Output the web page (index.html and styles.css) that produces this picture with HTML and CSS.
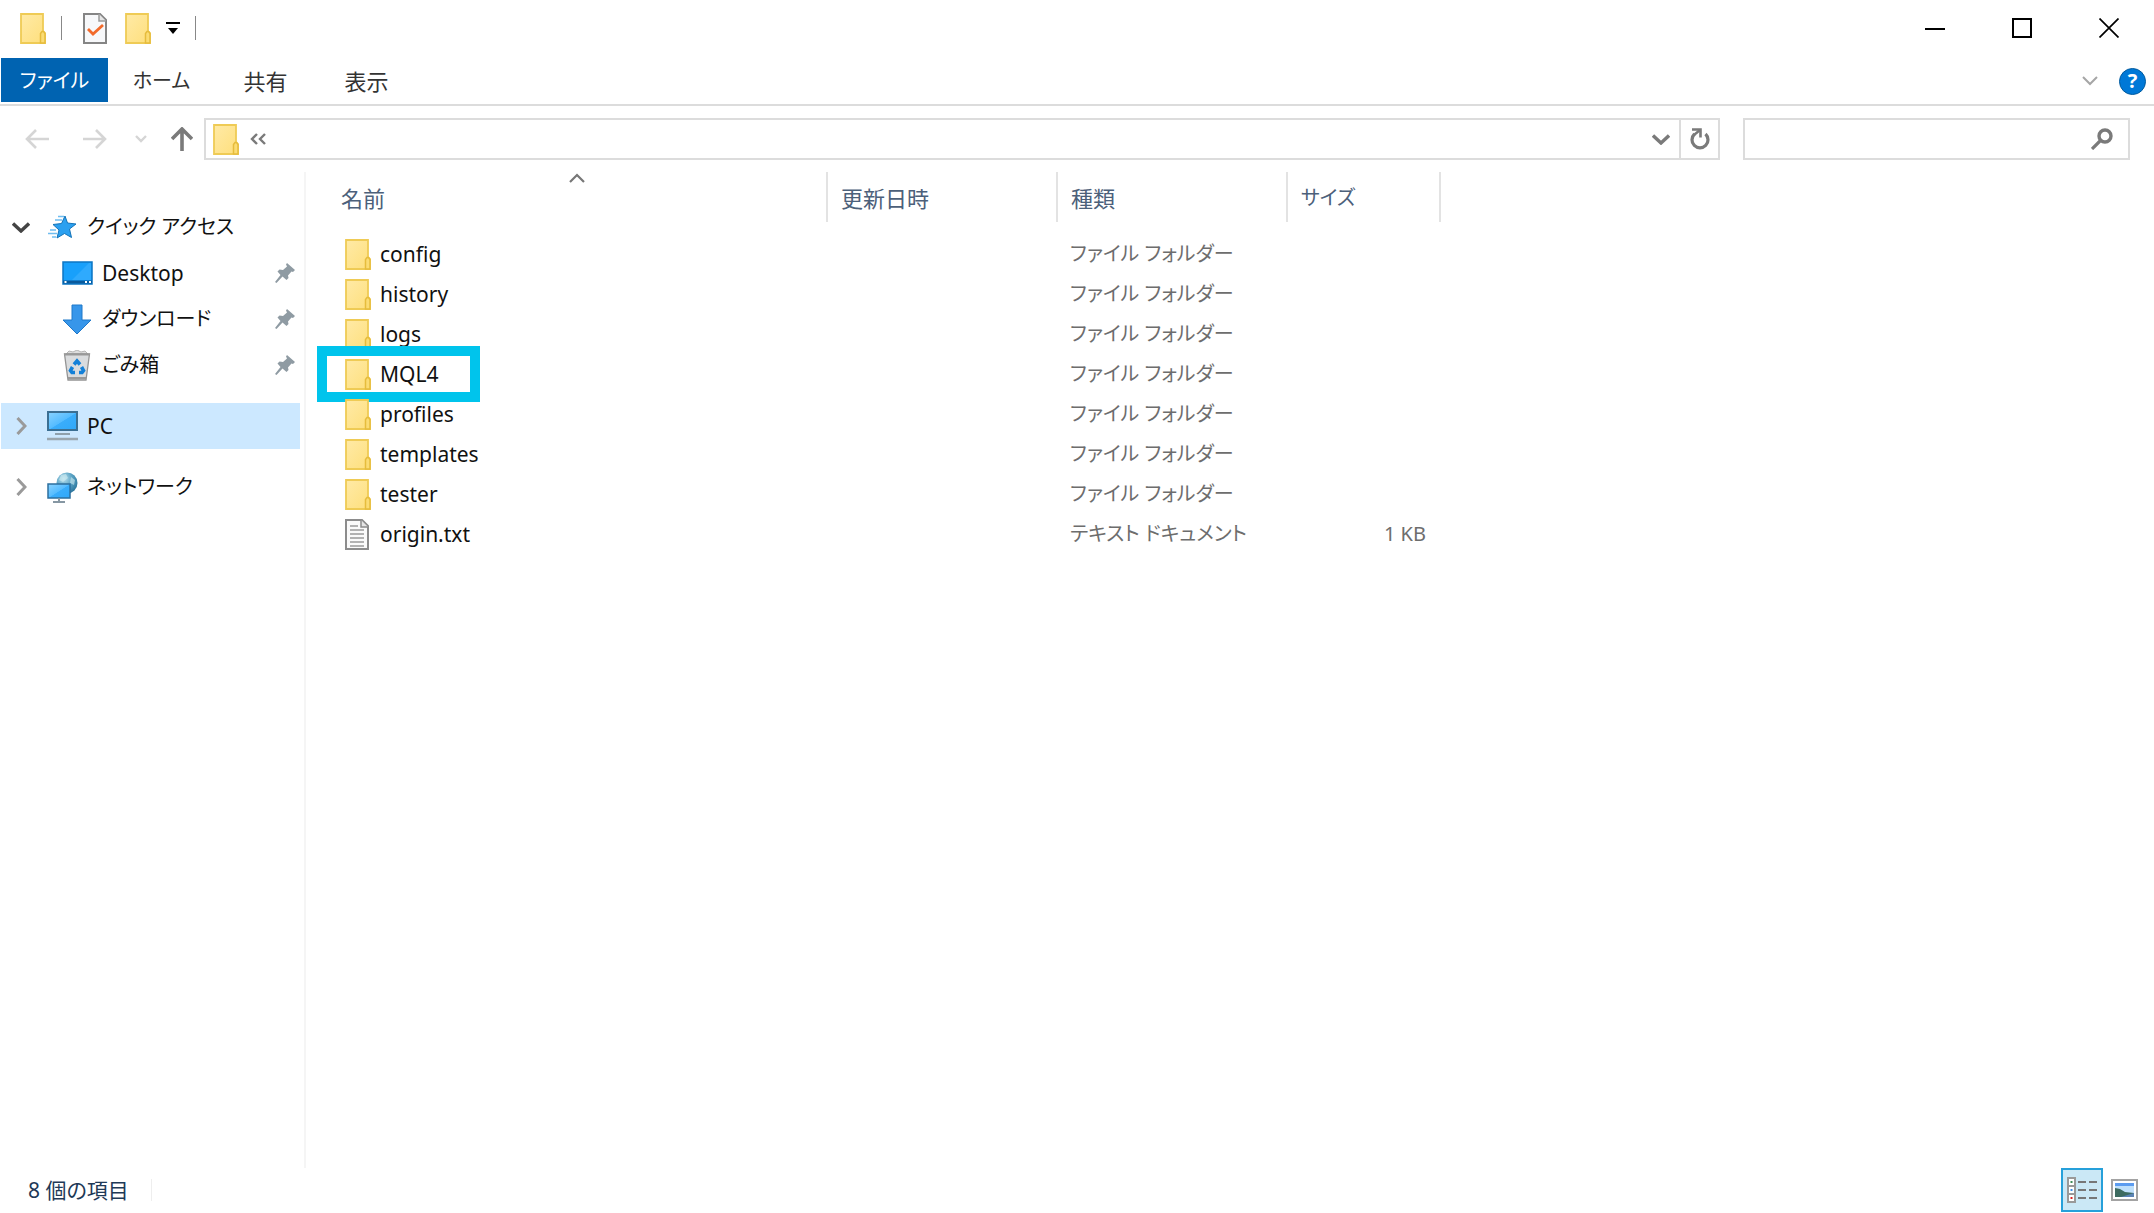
FILE: index.html
```html
<!DOCTYPE html>
<html lang="ja">
<head>
    <meta charset="UTF-8">
    <meta name="viewport" content="width=device-width, initial-scale=1.0">
    <title>エクスプローラー</title>
    <link rel="stylesheet" href="styles.css">
</head>
<body>
    <!-- Shared icons -->
    <svg class="sprite" aria-hidden="true">
        <defs>
            <linearGradient id="folder-fill" x1="0" y1="0" x2="1" y2="1">
                <stop offset="0" stop-color="#ffeaa6"/>
                <stop offset="1" stop-color="#fedf7c"/>
            </linearGradient>
            <linearGradient id="screen-fill" x1="0" y1="0" x2="1" y2="1">
                <stop offset="0" stop-color="#8bd3ff"/>
                <stop offset="0.5" stop-color="#55bcff"/>
                <stop offset="0.52" stop-color="#3aadfb"/>
                <stop offset="1" stop-color="#2fa8fa"/>
            </linearGradient>
            <radialGradient id="globe-fill" cx="0.35" cy="0.3" r="0.8">
                <stop offset="0" stop-color="#b9e0ee"/>
                <stop offset="0.5" stop-color="#5aa3c4"/>
                <stop offset="1" stop-color="#256f96"/>
            </radialGradient>
        </defs>
        <symbol id="folder" viewBox="0 0 26 31">
            <path d="M1 1H23V18L25 20V30H1Z" fill="url(#folder-fill)" stroke="#efcb55" stroke-width="1.8"/>
            <path d="M20.5 30V20.5L22 18.5H23.5L25 20.5V30Z" fill="#fbdc74" stroke="#e6bc3c" stroke-width="1.5"/>
        </symbol>
        <symbol id="pin" viewBox="0 0 20 20">
            <path d="M12 0L20 7L18 9L16.5 8.5L13 12.5L13.5 15L11.5 17L7.5 13.5L1.5 20L0 19L5.5 12L2.5 8.5L4.5 6.5L8 7L12 3.5L11 1.5Z" fill="#8f9ba3"/>
        </symbol>
        <symbol id="chevron-right" viewBox="0 0 11 18">
            <path d="M1.5 1L9 9L1.5 17" fill="none" stroke="currentColor" stroke-width="3"/>
        </symbol>
        <symbol id="chevron-down" viewBox="0 0 18 11">
            <path d="M1 1.5L9 9L17 1.5" fill="none" stroke="currentColor" stroke-width="3.4"/>
        </symbol>
    </svg>

    <div class="window">
        <header class="title-bar">
            <div class="quick-tools">
                <svg class="folder-icon"><use href="#folder"/></svg>
                <span class="tool-line"></span>
                <button class="tool tool-check" aria-label="プロパティ">
                    <svg width="24" height="31" viewBox="0 0 24 31">
                        <path d="M1 1H17L23 7V30H1Z" fill="#f7f8fa" stroke="#858585" stroke-width="2"/>
                        <path d="M16 1V8H23" fill="#e5e5e5" stroke="#9a9a9a" stroke-width="1.5"/>
                        <path d="M5 16L10 21L20 12" fill="none" stroke="#f26a2b" stroke-width="2.8"/>
                    </svg>
                </button>
                <button class="tool" aria-label="新しいフォルダー">
                    <svg class="folder-icon"><use href="#folder"/></svg>
                </button>
                <button class="tool" aria-label="クイック アクセス ツール バーのカスタマイズ">
                    <svg width="14" height="14" viewBox="0 0 14 14">
                        <path d="M0 2H14" stroke="#000" stroke-width="2"/>
                        <path d="M2 7H12L7 13Z" fill="#000"/>
                    </svg>
                </button>
                <span class="tool-line"></span>
            </div>
            <div class="window-buttons">
                <button aria-label="最小化">
                    <svg width="20" height="20"><path d="M0 11H20" stroke="#000" stroke-width="2"/></svg>
                </button>
                <button aria-label="最大化">
                    <svg width="20" height="20"><path d="M1 1H19V19H1Z" fill="none" stroke="#000" stroke-width="2"/></svg>
                </button>
                <button aria-label="閉じる">
                    <svg width="20" height="20"><path d="M0.5 0.5L19.5 19.5M19.5 0.5L0.5 19.5" stroke="#000" stroke-width="1.7"/></svg>
                </button>
            </div>
        </header>

        <nav class="ribbon">
            <button class="tab tab-kana tab-file">ファイル</button>
            <button class="tab tab-kana">ホーム</button>
            <button class="tab">共有</button>
            <button class="tab">表示</button>
            <div class="ribbon-end">
                <button class="ribbon-toggle" aria-label="リボンの展開">
                    <svg width="16" height="10"><path d="M1 1L8 8L15 1" fill="none" stroke="#a6a6a6" stroke-width="2"/></svg>
                </button>
                <button class="help" aria-label="ヘルプ">?</button>
            </div>
        </nav>

        <div class="nav-row">
            <div class="nav-buttons">
                <button class="nav-off" aria-label="戻る">
                    <svg width="24" height="20"><path d="M24 10H2M11 1L2 10L11 19" fill="none" stroke="currentColor" stroke-width="2.6"/></svg>
                </button>
                <button class="nav-off nav-forward" aria-label="進む">
                    <svg width="24" height="20"><path d="M0 10H22M13 1L22 10L13 19" fill="none" stroke="currentColor" stroke-width="2.6"/></svg>
                </button>
                <button class="nav-off" aria-label="最近表示した場所">
                    <svg width="12" height="8"><path d="M1 1L6 6L11 1" fill="none" stroke="currentColor" stroke-width="2.4"/></svg>
                </button>
                <button class="nav-up" aria-label="上へ">
                    <svg width="22" height="24"><path d="M11 24V2M1 12L11 2L21 12" fill="none" stroke="currentColor" stroke-width="3.6"/></svg>
                </button>
            </div>
            <div class="address">
                <svg class="folder-icon"><use href="#folder"/></svg>
                <button class="crumb" aria-label="上の階層">
                    <svg width="16" height="12"><path d="M7 1L2 6L7 11M15 1L10 6L15 11" fill="none" stroke="currentColor" stroke-width="2.4"/></svg>
                </button>
                <button class="address-drop" aria-label="以前の場所">
                    <svg width="18" height="11"><use href="#chevron-down"/></svg>
                </button>
                <button class="refresh" aria-label="最新の情報に更新">
                    <svg width="20" height="22" viewBox="0 0 20 22">
                        <path d="M4.5 6A8 8 0 1 0 15.5 6" fill="none" stroke="currentColor" stroke-width="3.2"/>
                        <path d="M2 1.5H10.5V9.5" fill="none" stroke="currentColor" stroke-width="2.6"/>
                        <path d="M10 2L4 7" stroke="currentColor" stroke-width="2.4"/>
                    </svg>
                </button>
            </div>
            <div class="search">
                <input class="search-input" type="text" aria-label="検索">
                <svg width="22" height="22" viewBox="0 0 22 22">
                    <circle cx="14" cy="8" r="6" fill="none" stroke="currentColor" stroke-width="3.4"/>
                    <path d="M10 12L1 21" stroke="currentColor" stroke-width="3.2"/>
                </svg>
            </div>
        </div>

        <main class="content">
            <aside class="sidebar">
                <a class="place" href="#">
                    <span class="expander open"><svg width="18" height="11"><use href="#chevron-down"/></svg></span>
                    <span class="place-icon">
                        <svg width="28" height="24" viewBox="0 0 28 24">
                            <path d="M17 1L19.5 8L28 9L21.5 14L23.5 22.5L16.5 18.5L9 23L11 15L5 9.5L13.500 8.500Z" fill="#2ba0f0" stroke="#1373b8"/>
                            <path d="M10 1.5H16M7 5H14M2 15H8M0 18.5H9M4 22H8" stroke="#6fbdf0" stroke-width="1.5"/>
                        </svg>
                    </span>
                    クイック アクセス
                </a>
                <a class="place child latin" href="#">
                    <span class="place-icon">
                        <svg width="31" height="24" viewBox="0 0 31 24">
                            <rect x="1" y="1" width="29" height="22" fill="#18a0fb" stroke="#0c76c4" stroke-width="1.5"/>
                            <path d="M10 19L27 2H29V19Z" fill="#2faafd"/>
                            <path d="M1 21H30" stroke="#0a5a9c" stroke-width="3"/>
                            <path d="M2.5 21H4.5M23 21H25M27 21H29" stroke="#fff" stroke-width="2"/>
                        </svg>
                    </span>
                    Desktop
                    <svg class="pin"><use href="#pin"/></svg>
                </a>
                <a class="place child" href="#">
                    <span class="place-icon">
                        <svg width="30" height="31" viewBox="0 0 30 31">
                            <path d="M10 1H20V16H29L15 30L1 16H10Z" fill="#3796ea" stroke="#1f78c9"/>
                        </svg>
                    </span>
                    ダウンロード
                    <svg class="pin"><use href="#pin"/></svg>
                </a>
                <a class="place child" href="#">
                    <span class="place-icon">
                        <svg width="28" height="31" viewBox="0 0 28 31">
                            <path d="M3 4L6 1L10 2L14 0L18 2L22 1L25 4Z" fill="#dedede" stroke="#b5b5b5"/>
                            <path d="M1.5 4H26.5L23 30H5Z" fill="#dadcde" stroke="#949494" stroke-width="1.3"/>
                            <path d="M1 4.500H27M5 28H23" stroke="#999" stroke-width="2"/>
                            <path d="M11 14.5L14 11L17 14.5M18.5 17L20.5 20.5L19 22.500H16M12 22.500H9L7.500 20.500L9.500 17" fill="none" stroke="#1380d8" stroke-width="3.600"/>
                        </svg>
                    </span>
                    ごみ箱
                    <svg class="pin"><use href="#pin"/></svg>
                </a>
                <a class="place group latin selected" href="#">
                    <span class="expander"><svg width="11" height="18"><use href="#chevron-right"/></svg></span>
                    <span class="place-icon">
                        <svg width="31" height="30" viewBox="0 0 31 30">
                            <rect x="1" y="1" width="29" height="18" fill="url(#screen-fill)" stroke="#3b6f93" stroke-width="2"/>
                            <path d="M8 23H23" stroke="#8fa0ab" stroke-width="2"/>
                            <path d="M0 28H31" stroke="#9aa6ae" stroke-width="2.5"/>
                        </svg>
                    </span>
                    PC
                </a>
                <a class="place group" href="#">
                    <span class="expander"><svg width="11" height="18"><use href="#chevron-right"/></svg></span>
                    <span class="place-icon">
                        <svg width="31" height="31" viewBox="0 0 31 31">
                            <circle cx="20" cy="11" r="10.5" fill="url(#globe-fill)"/>
                            <path d="M14 3L19 2L21 6L16 10L12 8ZM24 5L28 8L27 13L23 11Z" fill="#d0ecf2" opacity="0.6"/>
                            <rect x="1" y="12" width="22" height="14" fill="url(#screen-fill)" stroke="#2c6f9e" stroke-width="1.5"/>
                            <path d="M12 26V29M6 30H18" stroke="#8697a3" stroke-width="2"/>
                        </svg>
                    </span>
                    ネットワーク
                </a>
            </aside>

            <section class="files">
                <table class="file-table">
                    <colgroup>
                        <col class="col-name">
                        <col class="col-date">
                        <col class="col-type">
                        <col class="col-size">
                    </colgroup>
                    <thead>
                        <tr>
                            <th>名前
                                <svg class="sort-mark" width="16" height="10"><path d="M1 9L8 2L15 9" fill="none" stroke="#777" stroke-width="2.2"/></svg>
                            </th>
                            <th>更新日時</th>
                            <th>種類</th>
                            <th class="kana">サイズ</th>
                        </tr>
                    </thead>
                    <tbody>
                        <tr>
                            <td><div class="file-name"><svg class="folder-icon"><use href="#folder"/></svg>config</div></td>
                            <td></td>
                            <td>ファイル フォルダー</td>
                            <td></td>
                        </tr>
                        <tr>
                            <td><div class="file-name"><svg class="folder-icon"><use href="#folder"/></svg>history</div></td>
                            <td></td>
                            <td>ファイル フォルダー</td>
                            <td></td>
                        </tr>
                        <tr>
                            <td><div class="file-name"><svg class="folder-icon"><use href="#folder"/></svg>logs</div></td>
                            <td></td>
                            <td>ファイル フォルダー</td>
                            <td></td>
                        </tr>
                        <tr>
                            <td><div class="file-name marked"><svg class="folder-icon"><use href="#folder"/></svg>MQL4</div></td>
                            <td></td>
                            <td>ファイル フォルダー</td>
                            <td></td>
                        </tr>
                        <tr>
                            <td><div class="file-name"><svg class="folder-icon"><use href="#folder"/></svg>profiles</div></td>
                            <td></td>
                            <td>ファイル フォルダー</td>
                            <td></td>
                        </tr>
                        <tr>
                            <td><div class="file-name"><svg class="folder-icon"><use href="#folder"/></svg>templates</div></td>
                            <td></td>
                            <td>ファイル フォルダー</td>
                            <td></td>
                        </tr>
                        <tr>
                            <td><div class="file-name"><svg class="folder-icon"><use href="#folder"/></svg>tester</div></td>
                            <td></td>
                            <td>ファイル フォルダー</td>
                            <td></td>
                        </tr>
                        <tr>
                            <td>
                                <div class="file-name">
                                    <svg class="folder-icon" viewBox="0 0 26 31">
                                        <path d="M1 1H17L23 7V30H1Z" fill="#fafafa" stroke="#8c8c8c" stroke-width="2"/>
                                        <path d="M16 1V8H23" fill="#e5e5e5" stroke="#8c8c8c" stroke-width="1.5"/>
                                        <path d="M5 7H13M5 11H19M5 15H19M5 19H19M5 23H19M5 27H19" stroke="#9a9a9a" stroke-width="1.5"/>
                                    </svg>origin.txt
                                </div>
                            </td>
                            <td></td>
                            <td>テキスト ドキュメント</td>
                            <td>1 KB</td>
                        </tr>
                    </tbody>
                </table>
            </section>
        </main>

        <footer class="status-bar">
            <span class="item-count">8 個の項目</span>
            <div class="view-buttons">
                <button class="view view-active" aria-label="詳細">
                    <svg width="30" height="26" viewBox="0 0 30 26">
                        <path d="M1 1H8V25H1ZM1 9H8M1 17H8" fill="#fff" stroke="#999" stroke-width="2"/>
                        <path d="M11 5H19M22 5H30M11 13H19M22 13H30M11 21H19M22 21H30" stroke="#777" stroke-width="2"/>
                        <path d="M3.5 5H5.5" stroke="#3d8b57" stroke-width="2"/>
                        <path d="M3.5 13H5.5" stroke="#3c8ee8" stroke-width="2"/>
                        <path d="M3.5 21H5.5" stroke="#d22" stroke-width="2"/>
                    </svg>
                </button>
                <button class="view" aria-label="大アイコン">
                    <svg width="27" height="22" viewBox="0 0 27 22">
                        <rect x="1" y="1" width="25" height="20" fill="#fff" stroke="#a3a3a3" stroke-width="2"/>
                        <rect x="4" y="4" width="19" height="14" fill="#bfe0fb"/>
                        <path d="M4 4H23V7H4Z" fill="#5c9cf0"/>
                        <path d="M4 9L9 10L14 13L23 14V18H4Z" fill="#3d6b60"/>
                        <path d="M10 18L23 14V18Z" fill="#5a83b5"/>
                    </svg>
                </button>
            </div>
        </footer>
    </div>
</body>
</html>
```

FILE: styles.css
```css
*,
*::before,
*::after {
    box-sizing: border-box;
}

body {
    margin: 0;
    font-family: "Noto Sans", "Noto Sans CJK JP", sans-serif;
    font-size: 20px;
    line-height: 30px;
    font-feature-settings: "palt";
    color: #111;
    background: #fff;
}

button {
    padding: 0;
    border: 0;
    background: none;
    font: inherit;
    color: inherit;
    display: flex;
    align-items: center;
    justify-content: center;
}

svg {
    display: block;
    flex: none;
}

.sprite {
    position: absolute;
    width: 0;
    height: 0;
}

.window {
    min-height: 100vh;
    display: flex;
    flex-direction: column;
}

.folder-icon {
    width: 26px;
    height: 31px;
}

/* Title bar */
.title-bar {
    height: 58px;
    padding-bottom: 2px;
    display: flex;
    justify-content: space-between;
}

.quick-tools {
    display: flex;
    align-items: center;
    padding-left: 20px;
    gap: 15px;
}

.tool-line {
    width: 1px;
    height: 24px;
    background: #888;
}

.tool-check {
    margin: 0 3px 0 6px;
}

.window-buttons {
    display: flex;
    padding-right: 2px;
}

.window-buttons button {
    width: 87px;
}

/* Ribbon tabs */
.ribbon {
    display: flex;
    height: 48px;
    padding: 0 8px 2px 1px;
    border-bottom: 2px solid #dcdcdc;
}

.tab {
    width: 101px;
    padding-top: 2px;
    font-size: 22px;
    color: #333;
}

.tab-kana {
    width: 107px;
    font-size: 20px;
}

.tab-file {
    background: #0063b1;
    color: #fff;
}

.ribbon-end {
    display: flex;
    align-items: center;
    gap: 21px;
    margin-left: auto;
    padding-top: 2px;
}

.help {
    width: 27px;
    height: 27px;
    border-radius: 50%;
    border: 1px solid #005a9e;
    background: #0078d7;
    color: #fff;
    font-weight: 700;
}

/* Navigation row */
.nav-row {
    display: flex;
    align-items: center;
    padding: 12px 24px 12px 0;
    color: #7a7a7a;
}

.nav-buttons {
    width: 204px;
    display: flex;
    align-items: center;
    gap: 24px;
    padding-left: 25px;
}

.nav-off {
    color: #d5d5d5;
}

.nav-forward {
    margin: 0 4px 0 10px;
}

.address,
.search {
    height: 42px;
    border: 2px solid #dcdcdc;
    display: flex;
    align-items: center;
}

.address {
    flex: 1;
    padding-left: 7px;
}

.crumb {
    margin-left: 11px;
}

.address-drop {
    width: 36px;
    margin-left: auto;
}

.refresh {
    width: 39px;
    align-self: stretch;
    border-left: 2px solid #dcdcdc;
}

.search {
    width: 387px;
    margin-left: 23px;
    padding-right: 15px;
}

.search-input {
    flex: 1;
    min-width: 0;
    height: 100%;
    border: 0;
    outline: 0;
    font: inherit;
    background: none;
}

/* Folder tree and file list */
.content {
    flex: 1;
    display: flex;
}

.sidebar {
    width: 306px;
    padding: 32px 4px 0 1px;
    border-right: 2px solid #f5f5f5;
}

.place {
    display: flex;
    align-items: center;
    height: 46px;
    padding-left: 5px;
    color: #111;
    text-decoration: none;
}

.place.child {
    padding-left: 59px;
}

.place.group {
    margin-top: 15px;
}

.latin {
    font-size: 21px;
}

.selected {
    background: #cce8ff;
}

.expander {
    width: 30px;
    margin-right: 9px;
    display: flex;
    justify-content: center;
    color: #9a9a9a;
}

.expander.open {
    color: #444;
}

.place-icon {
    width: 34px;
    margin-right: 8px;
    display: flex;
    justify-content: center;
}

.pin {
    width: 20px;
    height: 20px;
    margin: 0 5px 0 auto;
}

.files {
    flex: 1;
    padding-left: 22px;
}

.file-table {
    width: 1112px;
    table-layout: fixed;
    border-collapse: collapse;
}

.col-name {
    width: 499px;
}

.col-date,
.col-type {
    width: 230px;
}

.col-size {
    width: 153px;
}

.file-table th {
    position: relative;
    height: 50px;
    padding: 2px 0 0 13px;
    border-right: 2px solid #e3e3e3;
    text-align: left;
    font-size: 22px;
    font-weight: 400;
    color: #4c607a;
}

.file-table th.kana {
    font-size: 20px;
}

.sort-mark {
    position: absolute;
    top: 1px;
    left: 50%;
    margin-left: -8px;
}

.file-table tbody::before {
    content: "";
    display: block;
    height: 12px;
}

.file-table td {
    height: 40px;
    padding: 0 14px 0 13px;
    color: #6d6d6d;
}

.file-table td:first-child {
    padding-left: 17px;
}

.file-table td:last-child {
    text-align: right;
}

.file-name {
    position: relative;
    display: flex;
    align-items: center;
    gap: 9px;
    font-size: 21px;
    color: #111;
}

.marked::after {
    content: "";
    position: absolute;
    top: -13px;
    left: -28px;
    width: 163px;
    height: 56px;
    border: 10px solid #00c4ec;
}

/* Status bar */
.status-bar {
    height: 45px;
    padding: 0 16px 1px 28px;
    display: flex;
    align-items: center;
    justify-content: space-between;
    color: #1e3957;
}

.item-count {
    padding-right: 22px;
    border-right: 1px solid #eee;
    font-size: 21px;
    line-height: 22px;
}

.view-buttons {
    display: flex;
    gap: 8px;
}

.view-active {
    width: 42px;
    height: 44px;
    border: 2px solid #26a0da;
    background: #cbe8f6;
}
```
